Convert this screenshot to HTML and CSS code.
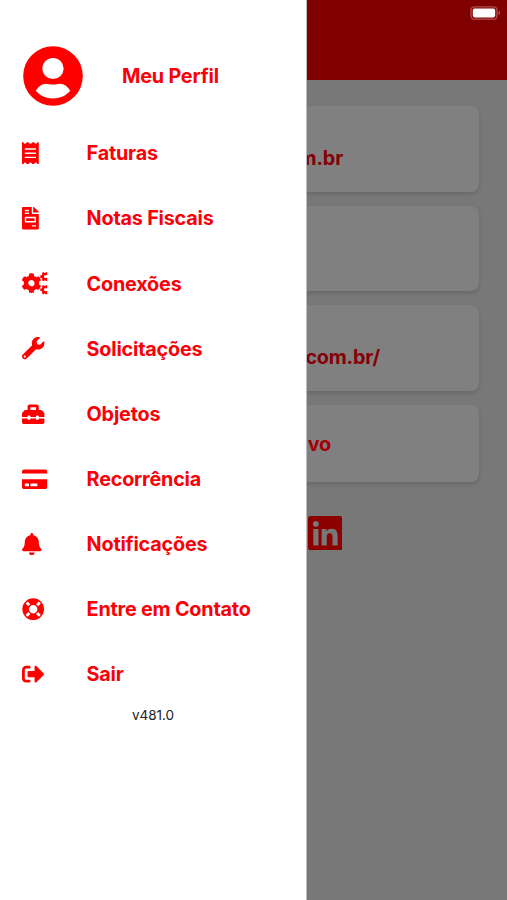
FILE: index.html
```html
<!DOCTYPE html>
<html lang="pt-BR">
<head>
    <meta charset="UTF-8">
    <meta name="viewport" content="width=device-width, initial-scale=1.0">
    <title>Menu</title>
    <link rel="stylesheet" href="styles.css">
</head>
<body>
    <div class="page">
        <header class="header">
            <svg class="battery" viewBox="0 0 31 14">
                <rect x="1" y="0.8" width="26" height="12.4" rx="3.5" fill="none" stroke="#b05050" stroke-width="1.3"/>
                <rect x="2.8" y="2.6" width="22.4" height="8.8" rx="1.8" fill="#fff"/>
                <path d="M28.6 4.8c2 .7 2 3.7 0 4.4z" fill="#b05050"/>
            </svg>
        </header>
        <main class="content">
            <div class="card"><span class="link email">m.br</span></div>
            <div class="card"></div>
            <div class="card"><span class="link site">.com.br/</span></div>
            <div class="card small"><span class="link file">tivo</span></div>
            <div class="social">
                <svg class="linkedin" viewBox="0 32 448 448"><path d="M416 32H31.9C14.3 32 0 46.5 0 64.3v383.4C0 465.5 14.3 480 31.9 480H416c17.6 0 32-14.5 32-32.3V64.3c0-17.8-14.4-32.3-32-32.3zM135.4 416H69V202.2h66.5V416zm-33.2-243c-21.3 0-38.5-17.3-38.5-38.5S80.9 96 102.2 96c21.2 0 38.5 17.3 38.5 38.5 0 21.3-17.2 38.5-38.5 38.5zm282.1 243h-66.4V312c0-24.8-.5-56.7-34.5-56.7-34.6 0-39.9 27-39.9 54.9V416h-66.4V202.2h63.7v29.2h.9c8.9-16.8 30.6-34.5 62.9-34.5 67.2 0 79.7 44.3 79.7 101.9V416z"/></svg>
            </div>
        </main>
    </div>

    <nav class="drawer">
        <div class="profile">
            <svg class="avatar" viewBox="0 0 60 60">
                <circle cx="30" cy="30" r="29.8"/>
                <circle cx="30" cy="22.5" r="10.6" fill="#fff"/>
                <path d="M12.8 44.7C15.5 40 19 37.7 23 37.7c2.4 0 3.8.9 7 .9s4.6-.9 7-.9c4 0 7.500 2.300 10.200 7C43 49.800 37 52.400 30 52.400s-13-2.600-17.200-7.700z" fill="#fff"/>
            </svg>
            <span>Meu Perfil</span>
        </div>
        <ul class="menu">
            <li>
                <svg class="icon" viewBox="0 0 576 512"><path d="M358.4 3.2L320 48 265.6 3.2a15.9 15.9 0 0 0-19.2 0L192 48 137.6 3.2a15.9 15.9 0 0 0-19.2 0L64 48 25.6 3.2C15-4.7 0 2.8 0 16v480c0 13.2 15 20.7 25.6 12.8L64 464l54.4 44.8a15.9 15.9 0 0 0 19.2 0L192 464l54.4 44.8a15.9 15.9 0 0 0 19.2 0L320 464l38.4 44.8c10.5 7.9 25.6.4 25.6-12.8V16c0-13.3-15.1-20.7-25.6-12.8zM320 360c0 4.4-3.6 8-8 8H72c-4.4 0-8-3.6-8-8v-16c0-4.4 3.6-8 8-8h240c4.4 0 8 3.6 8 8v16zm0-96c0 4.4-3.6 8-8 8H72c-4.4 0-8-3.6-8-8v-16c0-4.4 3.6-8 8-8h240c4.4 0 8 3.6 8 8v16zm0-96c0 4.4-3.6 8-8 8H72c-4.4 0-8-3.6-8-8v-16c0-4.4 3.6-8 8-8h240c4.4 0 8 3.6 8 8v16z"/></svg>
                <span>Faturas</span>
            </li>
            <li>
                <svg class="icon" viewBox="0 0 576 512"><path d="M288 256H96v64h192v-64zm89-151L279.1 7c-4.5-4.5-10.6-7-17-7H256v128h128v-6.1c0-6.3-2.5-12.4-7-16.9zm-153 31V0H24C10.7 0 0 10.7 0 24v464c0 13.3 10.7 24 24 24h336c13.3 0 24-10.7 24-24V160H248c-13.2 0-24-10.8-24-24zM64 72c0-4.42 3.58-8 8-8h80c4.42 0 8 3.58 8 8v16c0 4.42-3.58 8-8 8H72c-4.42 0-8-3.58-8-8V72zm0 64c0-4.42 3.58-8 8-8h80c4.42 0 8 3.58 8 8v16c0 4.42-3.58 8-8 8H72c-4.42 0-8-3.58-8-8v-16zm256 304c0 4.42-3.58 8-8 8h-80c-4.42 0-8-3.58-8-8v-16c0-4.42 3.58-8 8-8h80c4.42 0 8 3.58 8 8v16zm0-200v96c0 8.84-7.16 16-16 16H80c-8.84 0-16-7.16-16-16v-96c0-8.84 7.16-16 16-16h224c8.84 0 16 7.16 16 16z"/></svg>
                <span>Notas Fiscais</span>
            </li>
            <li>
                <svg class="icon" viewBox="0 0 576 512">
                    <path d="M386.3 286.1l33.7 16.8c10.1 5.8 14.5 18.1 10.5 29.1-8.9 24.2-26.4 46.4-42.6 65.8-7.4 8.9-20.2 11.1-30.3 5.3l-29.1-16.8c-16 13.7-34.6 24.6-54.9 31.7v33.6c0 11.6-8.3 21.6-19.7 23.6-24.6 4.2-50.4 4.4-75.9 0-11.5-2-20-11.9-20-23.6V418c-20.3-7.2-38.9-18-54.9-31.7L74 403c-10 5.8-22.9 3.6-30.3-5.3-16.2-19.4-33.3-41.6-42.2-65.7-4-10.9.4-23.2 10.5-29.1l33.3-16.8c-3.9-20.9-3.9-42.4 0-63.4L12 205.8c-10.1-5.8-14.6-18.1-10.5-29 8.9-24.2 26-46.4 42.2-65.8 7.4-8.9 20.2-11.1 30.3-5.3l29.1 16.8c16-13.7 34.6-24.6 54.9-31.7V57.1c0-11.5 8.2-21.5 19.6-23.5 24.6-4.2 50.5-4.4 76-.1 11.5 2 20 11.9 20 23.6v33.6c20.3 7.2 38.9 18 54.9 31.7l29.1-16.8c10-5.8 22.9-3.6 30.3 5.3 16.2 19.4 33.2 41.6 42.1 65.8 4 10.9.1 23.2-10 29.1l-33.7 16.8c3.9 21 3.9 42.5 0 63.5zm-117.6 21.1c59.2-77-28.7-164.9-105.7-105.7-59.2 77 28.7 164.9 105.7 105.7z"/>
                    <!-- small cogs, cut open on the right -->
                    <path id="cog" d="M576 74h-46c-14 0-26 12-26 32s12 32 26 32h46v70h-40v-18h-22l-10 18h-20l-28-20 8-30-14-22h-32V76h32l14-22-8-30 28-20h20l10 18h22V4h40z"/>
                    <use href="#cog" y="298.9"/>
                </svg>
                <span>Conexões</span>
            </li>
            <li>
                <svg class="icon" viewBox="0 0 576 512"><path d="M507.73 109.1c-2.24-9.03-13.54-12.09-20.12-5.51l-74.36 74.36-67.88-11.31-11.31-67.88 74.36-74.36c6.62-6.62 3.43-17.9-5.66-20.16-47.38-11.74-99.55.91-136.58 37.93-39.64 39.64-50.55 97.1-34.05 147.2L18.74 402.76c-24.99 24.99-24.99 65.51 0 90.5 24.99 24.99 65.51 24.99 90.5 0l213.21-213.21c50.12 16.71 107.47 5.68 147.37-34.22 37.07-37.07 49.7-89.32 37.91-136.73zM64 472c-13.25 0-24-10.75-24-24 0-13.26 10.75-24 24-24s24 10.74 24 24c0 13.25-10.75 24-24 24z"/></svg>
                <span>Solicitações</span>
            </li>
            <li>
                <svg class="icon" viewBox="0 0 576 512"><path d="M502.63 214.63l-45.25-45.25c-6-6-14.14-9.37-22.63-9.37H384V80c0-26.51-21.49-48-48-48H176c-26.51 0-48 21.49-48 48v80H77.25c-8.49 0-16.62 3.37-22.63 9.37L9.37 214.63c-6 6-9.37 14.14-9.37 22.63V320h128v-16c0-8.84 7.16-16 16-16h32c8.84 0 16 7.16 16 16v16h128v-16c0-8.84 7.16-16 16-16h32c8.84 0 16 7.16 16 16v16h128v-82.75c0-8.48-3.37-16.62-9.37-22.62zM320 160H192V96h128v64zm64 208c0 8.84-7.16 16-16 16h-32c-8.84 0-16-7.16-16-16v-16H192v16c0 8.84-7.16 16-16 16h-32c-8.84 0-16-7.16-16-16v-16H0v96c0 17.67 14.33 32 32 32h448c17.67 0 32-14.33 32-32v-96H384v16z"/></svg>
                <span>Objetos</span>
            </li>
            <li>
                <svg class="icon" viewBox="0 0 576 512"><path d="M0 432c0 26.5 21.5 48 48 48h480c26.5 0 48-21.5 48-48V256H0v176zm192-68c0-6.6 5.4-12 12-12h136c6.6 0 12 5.4 12 12v40c0 6.6-5.4 12-12 12H204c-6.6 0-12-5.4-12-12v-40zm-128 0c0-6.6 5.4-12 12-12h72c6.6 0 12 5.4 12 12v40c0 6.6-5.4 12-12 12H76c-6.6 0-12-5.4-12-12v-40zM576 80v48H0V80c0-26.5 21.5-48 48-48h480c26.5 0 48 21.5 48 48z"/></svg>
                <span>Recorrência</span>
            </li>
            <li>
                <svg class="icon" viewBox="0 0 576 512"><path d="M224 512c35.32 0 63.97-28.65 63.97-64H160.03c0 35.35 28.65 64 63.97 64zm215.39-149.71c-19.32-20.76-55.47-51.99-55.47-154.29 0-77.7-54.48-139.9-127.94-155.16V32c0-17.67-14.32-32-31.98-32s-31.98 14.33-31.98 32v20.84C118.56 68.1 64.08 130.3 64.08 208c0 102.3-36.15 133.53-55.47 154.29-6 6.45-8.66 14.16-8.61 21.71.11 16.4 12.98 32 32.1 32h383.8c19.12 0 32-15.6 32.1-32 .05-7.55-2.61-15.27-8.61-21.71z"/></svg>
                <span>Notificações</span>
            </li>
            <li>
                <svg class="icon" viewBox="0 0 576 512"><path d="M256 8C119.033 8 8 119.033 8 256s111.033 248 248 248 248-111.033 248-248S392.967 8 256 8zm173.696 119.559l-63.399 63.399c-10.987-18.559-26.67-34.252-45.255-45.255l63.399-63.399a218.396 218.396 0 0 1 45.255 45.255zM256 352c-53.019 0-96-42.981-96-96s42.981-96 96-96 96 42.981 96 96-42.981 96-96 96zM127.559 82.304l63.399 63.399c-18.559 10.987-34.252 26.67-45.255 45.255l-63.399-63.399a218.372 218.372 0 0 1 45.255-45.255zM82.304 384.441l63.399-63.399c10.987 18.559 26.67 34.252 45.255 45.255l-63.399 63.399a218.396 218.396 0 0 1-45.255-45.255zm302.137 45.255l-63.399-63.399c18.559-10.987 34.252-26.67 45.255-45.255l63.399 63.399a218.403 218.403 0 0 1-45.255 45.255z"/></svg>
                <span>Entre em Contato</span>
            </li>
            <li>
                <svg class="icon" viewBox="0 0 576 512"><path d="M497 273L329 441c-15 15-41 4.5-41-17v-96H152c-13.3 0-24-10.7-24-24v-96c0-13.3 10.7-24 24-24h136V88c0-21.4 25.9-32 41-17l168 168c9.3 9.4 9.3 24.6 0 34zM192 436v-40c0-6.6-5.4-12-12-12H96c-17.7 0-32-14.3-32-32V160c0-17.7 14.3-32 32-32h84c6.6 0 12-5.4 12-12V76c0-6.6-5.4-12-12-12H96c-53 0-96 43-96 96v192c0 53 43 96 96 96h84c6.6 0 12-5.4 12-12z"/></svg>
                <span>Sair</span>
            </li>
        </ul>
        <div class="version">v481.0</div>
    </nav>
</body>
</html>
```
FILE: styles.css
```css
* {
    box-sizing: border-box;
}
body {
    margin: 0;
    height: 900px;
    position: relative;
    overflow: hidden;
    font-family: Inter, "Liberation Sans", sans-serif;
    font-size: 19.8px;
    font-weight: 650;
    letter-spacing: -0.2px;
}
/* page colours are already dimmed by the open drawer */
.page {
    height: 900px;
    background: #787878;
}
.header {
    display: flex;
    justify-content: flex-end;
    height: 80px;
    padding: 6px 6px 0 0;
    background: #800000;
}
.battery {
    width: 31px;
    height: 14px;
}
.content {
    display: flex;
    flex-direction: column;
    gap: 14px;
    padding: 26px 28px 0;
}
.card {
    height: 85.6px;
    padding-top: 39px;
    border-radius: 8px;
    background: #808080;
    box-shadow: 0 2px 4px rgba(0, 0, 0, 0.14);
    text-align: right;
}
.card.small {
    height: 77.5px;
    padding-top: 26px;
}
.link {
    display: block;
    line-height: 26px;
    color: #850006;
}
.email {
    padding-right: 136px;
}
.site {
    padding-right: 99px;
}
.file {
    padding-right: 148px;
    color: #a40006;
}
.social {
    display: flex;
    justify-content: flex-end;
    padding: 19.5px 137px 0 0;
}
.linkedin {
    width: 34.5px;
    height: 34.5px;
    fill: #8c0000;
}
.drawer {
    position: absolute;
    top: 0;
    left: 0;
    width: 307px;
    height: 900px;
    padding-top: 45.5px;
    border-right: 1px solid #bcbcbc;
    background: #fff;
    color: #fb0007;
}
.profile {
    display: flex;
    align-items: center;
    gap: 39.5px;
    height: 60px;
    padding-left: 22.5px;
}
.avatar {
    width: 60px;
    height: 60px;
    fill: #ff0000;
}
.menu {
    margin: 0;
    padding: 15.2px 0 0 22.4px;
    list-style: none;
}
.menu li {
    display: flex;
    align-items: center;
    gap: 39px;
    height: 65.15px;
}
.icon {
    width: 25.2px;
    height: 22.4px;
    fill: #ff0000;
}
.version {
    margin-top: -1px;
    text-align: center;
    font-size: 13.5px;
    font-weight: 400;
    letter-spacing: 0;
    line-height: 18px;
    color: #222;
}
```
